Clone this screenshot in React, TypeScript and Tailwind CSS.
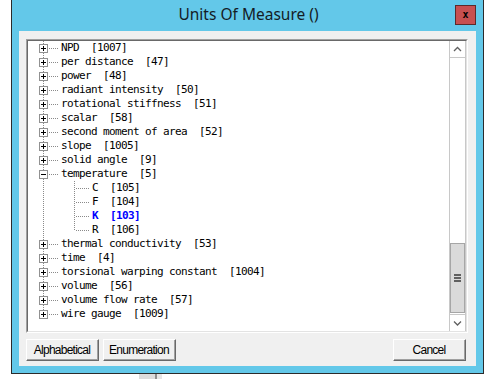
import React from "react";

type Item = { label: string; kind: "plus" | "minus" | "child"; selected?: boolean; last?: boolean };

const items: Item[] = [
  { label: "NPD  [1007]", kind: "plus" },
  { label: "per distance  [47]", kind: "plus" },
  { label: "power  [48]", kind: "plus" },
  { label: "radiant intensity  [50]", kind: "plus" },
  { label: "rotational stiffness  [51]", kind: "plus" },
  { label: "scalar  [58]", kind: "plus" },
  { label: "second moment of area  [52]", kind: "plus" },
  { label: "slope  [1005]", kind: "plus" },
  { label: "solid angle  [9]", kind: "plus" },
  { label: "temperature  [5]", kind: "minus" },
  { label: "C  [105]", kind: "child" },
  { label: "F  [104]", kind: "child" },
  { label: "K  [103]", kind: "child", selected: true },
  { label: "R  [106]", kind: "child", last: true },
  { label: "thermal conductivity  [53]", kind: "plus" },
  { label: "time  [4]", kind: "plus" },
  { label: "torsional warping constant  [1004]", kind: "plus" },
  { label: "volume  [56]", kind: "plus" },
  { label: "volume flow rate  [57]", kind: "plus" },
  { label: "wire gauge  [1009]", kind: "plus", last: true },
];

const DOT = "#8a8a8a";

function Row({ item }: { item: Item }) {
  const isChild = item.kind === "child";
  const w = isChild ? 64 : 33;
  return (
    <div className="flex h-[14px] items-center">
      <svg width={w} height={14} className="shrink-0" shapeRendering="crispEdges">
        <line x1="15.5" y1="0" x2="15.5" y2={!isChild && item.last ? 8 : 14} stroke={DOT} strokeDasharray="1 1" />
        {isChild ? (
          <>
            <line x1="46.5" y1="0" x2="46.5" y2={item.last ? 8 : 14} stroke={DOT} strokeDasharray="1 1" />
            <line x1="48" y1="7.5" x2="61" y2="7.5" stroke={DOT} strokeDasharray="1 1" />
          </>
        ) : (
          <>
            <line x1="21" y1="7.5" x2="31" y2="7.5" stroke={DOT} strokeDasharray="1 1" />
            <rect x="11.5" y="3.5" width="8" height="8" fill="#ffffff" stroke="#919191" />
            <line x1="13" y1="7.5" x2="18" y2="7.5" stroke="#000000" />
            {item.kind === "plus" && <line x1="15.5" y1="5" x2="15.5" y2="10" stroke="#000000" />}
          </>
        )}
      </svg>
      <span
        className={
          "whitespace-pre text-[11px] leading-[14px] tracking-[-0.62px] " +
          (item.selected ? "font-bold text-[#0000ff]" : "text-black")
        }
        style={{ fontFamily: '"DejaVu Sans Mono", "Liberation Mono", monospace' }}
      >
        {item.label}
      </span>
    </div>
  );
}

function Btn({ children }: { children: React.ReactNode }) {
  return (
    <div className="h-[22px] w-[73px] border-t border-l border-b border-r border-t-white border-l-white border-b-[#696969] border-r-[#696969] bg-[#f0f0f0]">
      <div className="flex h-full w-full items-center justify-center border-b border-r border-b-[#a0a0a0] border-r-[#a0a0a0] text-[12px] tracking-[-0.75px] text-black">
        {children}
      </div>
    </div>
  );
}

export default function App() {
  return (
    <div
      className="h-[379px] w-[492px] overflow-hidden bg-white"
      style={{ fontFamily: '"Liberation Sans", Arial, sans-serif' }}
    >
      <div className="ml-[11px] flex h-[374px] w-[473px] flex-col border-x border-b border-[#2b2b2b] bg-[#63c8e9]">
        {/* title bar */}
        <div className="relative flex h-[31px] shrink-0 items-center justify-center">
          <span
            className="pl-[2px] pb-[1px] text-[15.5px] text-[#141c26]"
            style={{ fontFamily: '"Noto Sans", "Open Sans", sans-serif' }}
          >
            Units Of Measure ()
          </span>
          <div className="absolute right-[7px] top-[5px] flex h-[20px] w-[21px] items-center justify-center border border-[#5c2a2a] bg-[#c75050]">
            <span className="text-[10px] font-bold leading-none text-black" style={{ fontFamily: '"DejaVu Sans Mono", monospace' }}>
              x
            </span>
          </div>
        </div>
        {/* client */}
        <div className="mx-[7px] flex h-[335px] flex-col bg-[#f0f0f0] px-[7px] pt-[8px]">
          <div className="mr-[1px] h-[294px] border-t border-l border-b border-r border-t-[#a0a0a0] border-l-[#a0a0a0] border-b-white border-r-white">
            <div className="flex h-full border-t border-l border-b border-r border-t-[#696969] border-l-[#696969] border-b-[#e3e3e3] border-r-[#e3e3e3] bg-white">
              <div className="flex-1 overflow-hidden">
                {items.map((it, i) => (
                  <Row key={i} item={it} />
                ))}
              </div>
              {/* scrollbar */}
              <div className="flex w-[17px] shrink-0 flex-col border-x border-[#c8c8c8] bg-white">
                <div className="flex h-[17px] items-center justify-center border-b border-[#c8c8c8]">
                  <svg width="9" height="6" viewBox="0 0 9 6">
                    <path d="M1 5 L4.5 1.5 L8 5" fill="none" stroke="#606060" strokeWidth="1.3" />
                  </svg>
                </div>
                <div className="flex flex-1 flex-col justify-end">
                  <div className="mb-[1px] flex h-[70px] flex-col items-center justify-center gap-[1px] border border-[#a6a6a6] bg-[#dadada]">
                    <div className="h-[2px] w-[7px] bg-[#606060]" />
                    <div className="h-[2px] w-[7px] bg-[#606060]" />
                    <div className="h-[2px] w-[7px] bg-[#606060]" />
                  </div>
                </div>
                <div className="flex h-[17px] items-center justify-center border-t border-[#c8c8c8]">
                  <svg width="9" height="6" viewBox="0 0 9 6">
                    <path d="M1 1.5 L4.5 5 L8 1.5" fill="none" stroke="#606060" strokeWidth="1.3" />
                  </svg>
                </div>
              </div>
            </div>
          </div>
          <div className="mt-[6px] flex pr-[3px]">
            <div className="flex gap-[4px]">
              <Btn>Alphabetical</Btn>
              <Btn>Enumeration</Btn>
            </div>
            <div className="flex-1" />
            <Btn>Cancel</Btn>
          </div>
        </div>
      </div>
      <div className="ml-[139px] flex h-[5px] w-[23px]">
        <div className="w-[16px] bg-[#dcdcdc]" />
        <div className="w-[2px] bg-[#8f8f8f]" />
        <div className="flex-1 bg-[#e6e6e6]" />
      </div>
    </div>
  );
}
